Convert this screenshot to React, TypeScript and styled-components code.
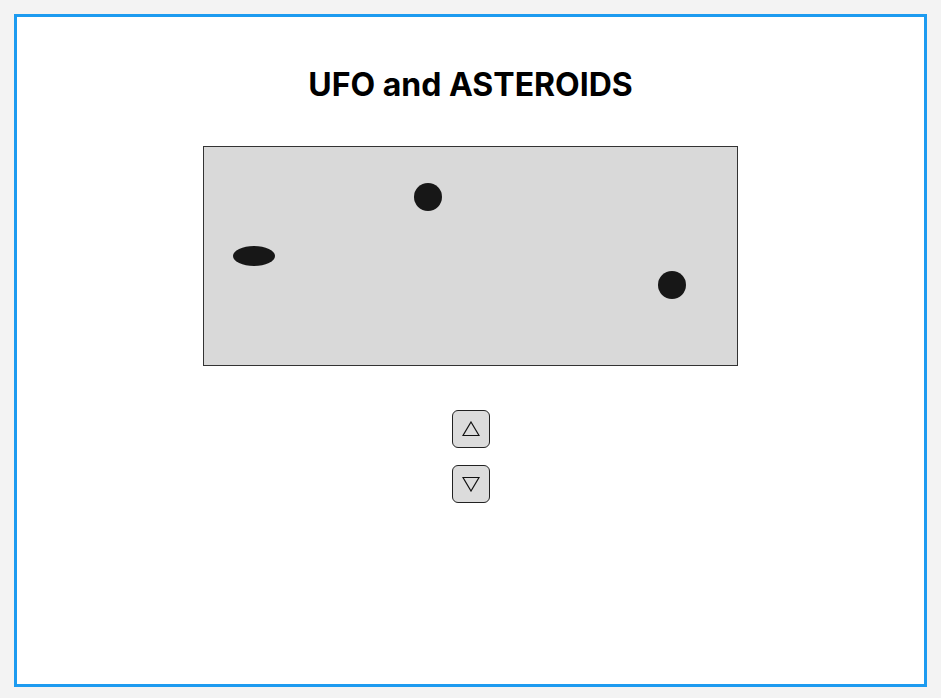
import { createGlobalStyle } from "styled-components";
import styled from "styled-components";

const GlobalStyle = createGlobalStyle`
  html, body {
    margin: 0;
    padding: 0;
    background: #f3f3f3;
    font-family: "Inter", "Liberation Sans", sans-serif;
  }
`;

const Frame = styled.div`
  box-sizing: border-box;
  margin: 14px;
  height: 673px;
  border: 3px solid #1d9bf0;
  background: #ffffff;
  display: flex;
  flex-direction: column;
  align-items: center;
  padding-top: 48px;
`;

const Title = styled.h1`
  margin: 0;
  font-size: 32px;
  font-weight: 700;
  line-height: 40px;
  color: #000;
`;

const Field = styled.div`
  position: relative;
  box-sizing: border-box;
  margin-top: 41px;
  width: 535px;
  height: 220px;
  border: 1px solid #333;
  background: #d9d9d9;
`;

// things that float in the field, placed by their coordinates
const Body = styled.div<{ $x: number; $y: number; $w: number; $h: number }>`
  position: absolute;
  left: ${({ $x }) => $x}px;
  top: ${({ $y }) => $y}px;
  width: ${({ $w }) => $w}px;
  height: ${({ $h }) => $h}px;
  border-radius: 50%;
  background: #171717;
`;

const Controls = styled.div`
  margin-top: 44px;
  display: flex;
  flex-direction: column;
  gap: 17px;
`;

const ArrowButton = styled.button`
  box-sizing: border-box;
  width: 38px;
  height: 38px;
  padding: 0;
  border: 1px solid #222;
  border-radius: 6px;
  background: #dcdcdc;
  display: flex;
  align-items: center;
  justify-content: center;
  cursor: pointer;
`;

function Triangle({ down }: { down?: boolean }) {
  return (
    <svg width="18" height="16" viewBox="0 0 18 16">
      <polygon
        points={down ? "1,1.5 17,1.5 9,15" : "9,1 17,14.5 1,14.5"}
        fill="none"
        stroke="#111"
        strokeWidth="1.2"
        strokeLinejoin="miter"
      />
    </svg>
  );
}

export default function App() {
  return (
    <>
      <GlobalStyle />
      <Frame>
        <Title>UFO and ASTEROIDS</Title>
        <Field>
          <Body $x={29} $y={99} $w={42} $h={20} />
          <Body $x={210} $y={36} $w={28} $h={28} />
          <Body $x={454} $y={124} $w={28} $h={28} />
        </Field>
        <Controls>
          <ArrowButton><Triangle /></ArrowButton>
          <ArrowButton><Triangle down /></ArrowButton>
        </Controls>
      </Frame>
    </>
  );
}
